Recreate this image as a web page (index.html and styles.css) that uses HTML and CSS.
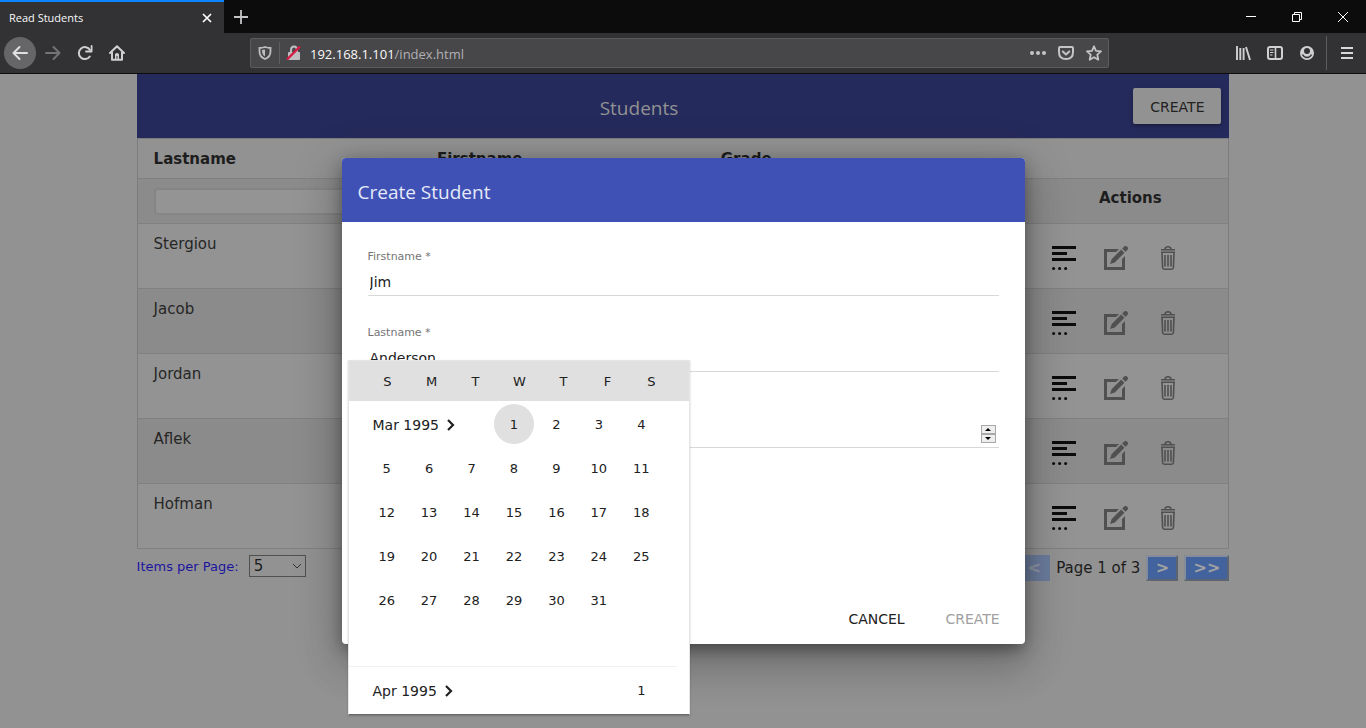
FILE: index.html
```html
<!DOCTYPE html>
<html lang="en">
<head>
<meta charset="utf-8">
<title>Read Students</title>
<link rel="stylesheet" href="styles.css">
</head>
<body>
<svg class="sprite" aria-hidden="true">
  <symbol id="details" viewBox="0 0 24 24"><path fill="#0c0c0c" d="M0 0h24v3H0zM0 6h15v3H0zM0 12h24v3H0z"/><g fill="#0c0c0c"><circle cx="1.6" cy="22.4" r="1.5"/><circle cx="7.6" cy="22.4" r="1.5"/><circle cx="13.6" cy="22.4" r="1.5"/></g></symbol>
  <symbol id="edit" viewBox="0 0 24 24"><path fill="#505050" d="M0 3h15L12 6H3v15h15v-8l3-3v14H0zM6 18l1.600-4.800L17.200 3.600l3.200 3.200-9.600 9.600zM18.200 2.600l1.400-1.500q2-2 3.700-.4 1.600 1.700-.4 3.700l-1.500 1.400z"/></symbol>
  <symbol id="trash" viewBox="0 0 24 24"><g fill="none" stroke="#505050" stroke-width="1.600"><path d="M5 3.800h14M9 3.500q0-2.700 3-2.700t3 2.700M5 6.200h14M6 6.500l.6 15q.1 1.700 1.800 1.700h7.200q1.700 0 1.800-1.700l.6-15M9 9v11.500M12 9v11.500M15 9v11.500"/></g></symbol>
</svg>

<header class="browser">
  <div class="tabbar">
    <div class="tab"><span>Read Students</span>
      <button class="plain" aria-label="Close tab"><svg width="10" height="10" viewBox="0 0 10 10"><path d="M1 1l8 8M9 1L1 9" stroke="#fff" stroke-width="1.700"/></svg></button>
    </div>
    <button class="plain newtab" aria-label="New tab"><svg width="14" height="14" viewBox="0 0 14 14"><path d="M7 0v14M0 7h14" stroke="#c4c4c6" stroke-width="1.800"/></svg></button>
    <div class="wincontrols">
      <button class="plain" aria-label="Minimize"><svg width="12" height="12" viewBox="0 0 12 12"><path d="M1 5.500h10" stroke="#fff"/></svg></button>
      <button class="plain" aria-label="Restore"><svg width="12" height="12" viewBox="0 0 12 12"><path d="M1.500 3.500h7v7h-7zM3.500 3.500v-2h7v7h-2" fill="none" stroke="#fff"/></svg></button>
      <button class="plain" aria-label="Close"><svg width="12" height="12" viewBox="0 0 12 12"><path d="M1 1l10 10M11 1L1 11" stroke="#fff"/></svg></button>
    </div>
  </div>
  <div class="navbar">
    <div class="navbuttons">
      <button class="plain back" aria-label="Back"><svg width="16" height="16" viewBox="0 0 16 16"><path d="M15 8H1.500M7.500 2l-6 6 6 6" fill="none" stroke="#e0e0e2" stroke-width="2" stroke-linecap="round" stroke-linejoin="round"/></svg></button>
      <button class="plain" aria-label="Forward"><svg width="16" height="16" viewBox="0 0 16 16"><path d="M1 8h13.500M8.500 2l6 6-6 6" fill="none" stroke="#747476" stroke-width="2" stroke-linecap="round" stroke-linejoin="round"/></svg></button>
      <button class="plain" aria-label="Reload"><svg width="16" height="16" viewBox="0 0 16 16"><path d="M12.800 11.500A6 6 0 1 1 13 5" fill="none" stroke="#d0d0d2" stroke-width="2" stroke-linecap="round"/><path d="M14.600 1v5.500H9" fill="none" stroke="#d0d0d2" stroke-width="1.800" stroke-linecap="round" stroke-linejoin="round"/></svg></button>
      <button class="plain" aria-label="Home"><svg width="16" height="16" viewBox="0 0 16 16"><path d="M1 8l7-6.800L15 8M3 7v7.800h10V7" fill="none" stroke="#d0d0d2" stroke-width="2" stroke-linecap="round" stroke-linejoin="round"/><path d="M6 14V9.500Q6 8 8 8t2 1.500V14H8.500v-3h-1v3z" fill="#d0d0d2"/></svg></button>
    </div>
    <div class="urlbar">
      <svg width="14" height="14" viewBox="0 0 14 14"><path d="M7 1q3 1 5.500 1v3.500Q12.500 11 7 13 1.500 11 1.500 5.500V2Q4 2 7 1z" fill="none" stroke="#bebec0" stroke-width="1.800"/><path d="M7 3.500v7Q4 9 4 4z" fill="#bebec0"/></svg>
      <span class="divider"></span>
      <svg width="16" height="16" viewBox="0 0 16 16"><rect x="2" y="7" width="12" height="8" rx="1" fill="#bebec0"/><path d="M5 7V5q0-3.500 3-3.500T11 5v2" fill="none" stroke="#bebec0" stroke-width="2"/><path d="M1 14.500L14 1.500" stroke="#d51b45" stroke-width="2.400"/></svg>
      <input class="address" aria-label="Address" value="192.168.1.101/index.html">
      <div class="address-text" aria-hidden="true">192.168.1.101<span>/index.html</span></div>
      <div class="urltools">
        <svg width="16" height="16" viewBox="0 0 16 16" fill="#c4c4c6"><circle cx="2" cy="8" r="2"/><circle cx="8" cy="8" r="2"/><circle cx="14" cy="8" r="2"/></svg>
        <svg width="16" height="16" viewBox="0 0 16 16" fill="none" stroke="#c4c4c6" stroke-width="2" stroke-linecap="round" stroke-linejoin="round"><path d="M2 2h12q1 0 1 1v4q0 7-7 7T1 7V3q0-1 1-1zM4.800 6.500L8 9.500l3.200-3"/></svg>
        <svg width="16" height="16" viewBox="0 0 16 16"><path d="M8 1.300l2 4.500 5 .6-3.700 3.300 1 5L8 12.200l-4.300 2.500 1-5L1 6.400l5-.6z" fill="none" stroke="#c4c4c6" stroke-width="1.800" stroke-linejoin="round"/></svg>
      </div>
    </div>
    <div class="navtools">
      <svg width="16" height="16" viewBox="0 0 16 16"><path d="M2 1v14M5.300 3v12M8.600 3v12M11 2l4 13" stroke="#d0d0d2" stroke-width="1.900"/></svg>
      <svg width="16" height="16" viewBox="0 0 16 16" fill="none" stroke="#d0d0d2"><rect x="1" y="2" width="14" height="12" rx="2" stroke-width="2"/><path d="M8.500 2v12" stroke-width="1.600"/><path d="M3 5h3.500M3 7.500h3.500M3 10h2.500"/></svg>
      <svg width="16" height="16" viewBox="0 0 16 16"><circle cx="8" cy="8" r="7" fill="#d0d0d2"/><circle cx="8" cy="6" r="3" fill="#323234"/><path d="M3.500 9.500Q5 12.500 8 12.500t4.500-3" fill="none" stroke="#323234" stroke-width="1.400"/></svg>
      <span class="divider tall"></span>
      <button class="plain" aria-label="Menu"><svg width="12" height="12" viewBox="0 0 12 12"><path d="M0 1h12M0 6h12M0 11h12" stroke="#d8d8da" stroke-width="2"/></svg></button>
    </div>
  </div>
</header>

<main class="page">
  <div class="content">
    <div class="toolbar"><h1>Students</h1><button class="create">CREATE</button></div>
    <table class="students">
      <colgroup><col class="c-name"><col class="c-name"><col class="c-grade"><col></colgroup>
      <thead>
        <tr><th>Lastname</th><th>Firstname</th><th>Grade</th><th></th></tr>
        <tr class="filters"><td><input aria-label="Filter lastname"></td><td></td><td></td><th>Actions</th></tr>
      </thead>
      <tbody>
        <tr><td>Stergiou</td><td></td><td></td><td><div class="actions"><svg><use href="#details"/></svg><svg><use href="#edit"/></svg><svg><use href="#trash"/></svg></div></td></tr>
        <tr><td>Jacob</td><td></td><td></td><td><div class="actions"><svg><use href="#details"/></svg><svg><use href="#edit"/></svg><svg><use href="#trash"/></svg></div></td></tr>
        <tr><td>Jordan</td><td></td><td></td><td><div class="actions"><svg><use href="#details"/></svg><svg><use href="#edit"/></svg><svg><use href="#trash"/></svg></div></td></tr>
        <tr><td>Aflek</td><td></td><td></td><td><div class="actions"><svg><use href="#details"/></svg><svg><use href="#edit"/></svg><svg><use href="#trash"/></svg></div></td></tr>
        <tr><td>Hofman</td><td></td><td></td><td><div class="actions"><svg><use href="#details"/></svg><svg><use href="#edit"/></svg><svg><use href="#trash"/></svg></div></td></tr>
      </tbody>
    </table>
    <div class="footer">
      <div class="perpage"><label for="size">Items per Page:</label>
        <div class="selectwrap"><select id="size"><option>5</option></select><svg width="10" height="6" viewBox="0 0 10 6"><path d="M1 1l4 4 4-4" fill="none" stroke="#333"/></svg></div>
      </div>
      <div class="pager"><button disabled>&lt;</button><span>Page 1 of 3</span><button>&gt;</button><button class="wide">&gt;&gt;</button></div>
    </div>
  </div>

  <section class="dialog" role="dialog" aria-labelledby="dlg-title">
    <h2 id="dlg-title">Create Student</h2>
    <form class="form">
      <div class="field"><label for="first">Firstname *</label><input id="first" value="Jim"></div>
      <div class="field"><label for="last">Lastname *</label><input id="last" value="Anderson"></div>
      <div class="field"><div class="blank"></div><div class="numrow"><input aria-label="Grade" inputmode="numeric">
        <div class="spinner"><button type="button" aria-label="Increase"><svg width="6" height="3" viewBox="0 0 6 3"><path d="M0 3l3-3 3 3z"/></svg></button><button type="button" aria-label="Decrease"><svg width="6" height="3" viewBox="0 0 6 3"><path d="M0 0h6L3 3z"/></svg></button></div></div></div>
    </form>
    <div class="dialog-actions"><button>CANCEL</button><button disabled>CREATE</button></div>

    <div class="calendar">
      <div class="weekdays"><span>S</span><span>M</span><span>T</span><span>W</span><span>T</span><span>F</span><span>S</span></div>
      <div class="month">
        <button class="month-name">Mar 1995<svg width="8" height="12" viewBox="0 0 8 12"><path d="M1 1l5 5-5 5" fill="none" stroke="#212121" stroke-width="2.200"/></svg></button>
        <button class="selected">1</button><button>2</button><button>3</button><button>4</button>
        <button>5</button><button>6</button><button>7</button><button>8</button><button>9</button><button>10</button><button>11</button>
        <button>12</button><button>13</button><button>14</button><button>15</button><button>16</button><button>17</button><button>18</button>
        <button>19</button><button>20</button><button>21</button><button>22</button><button>23</button><button>24</button><button>25</button>
        <button>26</button><button>27</button><button>28</button><button>29</button><button>30</button><button>31</button>
      </div>
      <div class="month next">
        <button class="month-name">Apr 1995<svg width="8" height="12" viewBox="0 0 8 12"><path d="M1 1l5 5-5 5" fill="none" stroke="#212121" stroke-width="2.200"/></svg></button>
        <button class="last">1</button>
      </div>
    </div>
  </section>
</main>
</body>
</html>
```
FILE: styles.css
```css
* { box-sizing: border-box; }
body { margin: 0; min-height: 100vh; display: flex; flex-direction: column; overflow: hidden; background: #929292; color: #1d1d1d; font: 15px/20px "DejaVu Sans", Verdana, sans-serif; }
button, input, select { font: inherit; color: inherit; margin: 0; }
button { padding: 0; border: 0; background: none; }
svg { display: block; flex: none; }
h1, h2 { margin: 0; font: 400 19px/28px "Open Sans", "Noto Sans", sans-serif; }
.sprite { position: absolute; width: 0; height: 0; }

/* Browser window */
.browser { font-family: "Open Sans", "Noto Sans", sans-serif; background: #323234; border-bottom: 1px solid #0c0c0d; }
.plain { display: flex; align-items: center; justify-content: center; }
.tabbar { display: flex; height: 33px; background: #0c0c0d; }
.tab { display: flex; align-items: center; justify-content: space-between; width: 224px; padding: 0 12px 0 9px; border-top: 2px solid #0a84ff; background: #323234; color: #f9f9fa; font-size: 11px; }
.newtab { width: 34px; }
.wincontrols { display: flex; margin-left: auto; }
.wincontrols button { width: 46px; }
.navbar { display: flex; align-items: center; height: 40px; }
.navbuttons { display: flex; width: 250px; padding-left: 4px; }
.navbuttons button { width: 32px; height: 32px; }
.navbuttons .back { margin-right: 1px; border-radius: 50%; background: #666668; }
.urlbar { position: relative; display: flex; align-items: center; flex: 1; height: 30px; padding: 0 6px 0 7px; border: 1px solid #5c5c5e; border-radius: 2px; background: #474749; }
.divider { width: 1px; height: 22px; margin: 0 6px 0 7px; background: #5e5e60; }
.address { position: absolute; left: 60px; right: 100px; border: 0; background: none; color: transparent; font-size: 13px; }
.address-text { margin-left: 8px; padding-top: 2px; color: #f9f9fa; font-size: 13px; }
.address-text span { color: #b0b0b2; }
.urltools { display: flex; gap: 12px; margin-left: auto; }
.navtools { display: flex; align-items: center; gap: 16px; width: 257px; justify-content: flex-end; padding-right: 13px; }
.tall { height: 34px; margin: 0 -2px 0 -5px; }

/* Student list */
.page { position: relative; flex: 1; }
.content { width: 80%; margin: 0 auto; }
.toolbar { display: flex; align-items: center; height: 64px; padding: 0 8px; background: #252a5c; color: #929292; }
.toolbar h1 { flex: 1; padding-top: 4px; text-align: center; }
.create { width: 88px; height: 36px; padding-top: 2px; border-radius: 2px; background: #929292; color: #222; font-size: 14px; box-shadow: 0 2px 4px #0005; }
.students { width: 100%; table-layout: fixed; border-collapse: collapse; border: 1px solid #7c7c7c; }
.c-name { width: 26%; }
.c-grade { width: 30%; }
.students tr { border-bottom: 1px solid #808080; }
.students th, .students td { padding: 9px 16px; text-align: left; vertical-align: top; }
.students thead tr { height: 39px; }
.students .filters { height: 45px; }
.students .filters td { padding-top: 9px; padding-bottom: 7px; }
.students .filters th { text-align: center; }
.students thead tr:first-child th { padding-top: 10px; }
.filters input { display: block; width: 100%; height: 27px; border: 2px solid #858585; border-radius: 4px; background: #949494; }
.students tbody td { padding-top: 10px; }
.students tbody tr { height: 65px; color: #262626; }
.filters, .students tbody tr:nth-child(even) { background: #8b8b8b; }
.students tbody tr:nth-child(odd) { background: #939393; }
.actions { display: flex; gap: 28px; padding-top: 12px; padding-left: 4px; }
.actions svg { width: 24px; height: 24px; }
.footer { display: flex; justify-content: space-between; padding-top: 6px; }
.perpage { display: flex; gap: 10px; font-size: 13px; }
.perpage label { color: #1c14a0; padding-top: 2px; }
.selectwrap { display: flex; align-items: center; position: relative; width: 57px; height: 22px; }
.selectwrap select { appearance: none; width: 100%; height: 100%; padding: 0 4px; border: 1px solid #505050; border-radius: 0; background: #929292; font-size: 15px; }
.selectwrap svg { position: absolute; right: 4px; }
.pager { display: flex; gap: 6px; line-height: 26px; }
.pager button { width: 32px; height: 26px; border: 2px solid; border-color: #858b98 #5c6472 #5c6472 #858b98; background: #43639f; color: #a2a2a2; line-height: 20px; font-size: 16px; font-weight: 700; }
.pager .wide { width: 45px; }
.pager button:disabled { background: #6b7c9d; border-color: #6b7c9d; color: #9298a4; }

/* Create dialog */
.dialog { position: absolute; top: 84px; left: 25%; width: 50%; border-radius: 4px; background: #fff; color: #212121; box-shadow: 0 11px 15px -7px #0003, 0 24px 38px 3px #0002, 0 9px 46px 8px #0002, 0 4px 16px #0004; }
.dialog h2 { padding: 20px 16px 16px; border-radius: 4px 4px 0 0; background: #3f51b5; color: #e6e9f8; }
.form { display: grid; gap: 26px; padding: 24px 26px 0; }
.field { display: grid; height: 50px; border-bottom: 1px solid #d8d8d8; font-size: 14px; }
.field label { height: 22px; padding-top: 1px; color: #757575; font-size: 11px; }
.field input { width: 100%; height: 25px; padding: 0 2px; border: 0; background: none; outline: 0; }
.blank { height: 22px; }
.numrow { display: flex; align-items: center; height: 25px; }
.spinner { display: grid; width: 15px; height: 18px; margin-right: 3px; flex: none; }
.spinner button { display: flex; align-items: center; justify-content: center; border: 1px solid #a8a8a8; background: #eee; }
.dialog-actions { display: flex; justify-content: flex-end; gap: 8px; padding: 153px 8px 7px; }
.dialog-actions button { width: 88px; height: 36px; font-size: 14px; }
.dialog-actions button:disabled { color: #a0a0a0; }

/* Date picker */
.calendar { position: absolute; top: 202px; left: 6px; width: 342px; border: 1px solid #e6e6e6; border-bottom-color: #666; background: #fff; font-size: 13px; box-shadow: 0 1px 2px #0003; }
.weekdays { display: grid; grid-template-columns: repeat(7, 44px); padding: 2px 16px 0 17px; height: 40px; align-items: center; text-align: center; background: #e0e0e0; }
.month { display: grid; grid-template-columns: repeat(7, 1fr); grid-auto-rows: 44px; align-items: center; justify-items: center; height: 265px; padding: 1px 26px 0 17px; }
.month button { width: 40px; height: 40px; padding-top: 1px; }
.month .month-name { display: flex; align-items: center; gap: 8px; grid-column: span 3; width: auto; justify-self: start; padding-left: 7px; font-size: 14px; }
.month .selected { border-radius: 50%; background: #e0e0e0; }
.next { height: 48px; margin-right: 12px; padding-right: 14px; border-top: 1px solid #f0f0f0; }
.last { grid-column: 7; }
```
